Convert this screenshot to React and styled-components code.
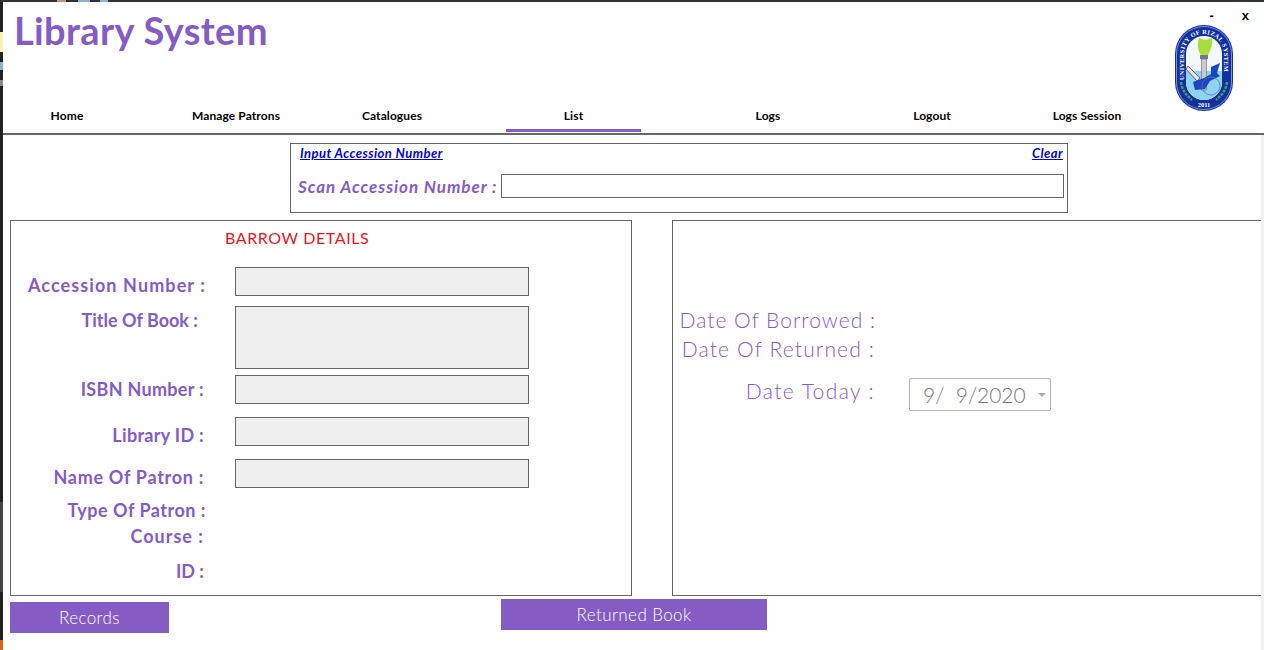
import React from "react";
import styled, { createGlobalStyle } from "styled-components";

const purple = "#845cc4";
const line = "#666";
const font = `"Lato", "Liberation Sans", sans-serif`;

const GlobalStyle = createGlobalStyle`
  html, body {
    margin: 0;
    padding: 0;
    background: #fff;
    overflow: hidden;
  }
`;

const Screen = styled.div`
  width: 1264px;
  height: 650px;
  display: flex;
  flex-direction: column;
  overflow: hidden;
`;

// bits of the desktop that show behind the window
const DesktopTop = styled.div`
  height: 2px;
  flex: none;
  background: linear-gradient(
    to right,
    #333 57px,
    #b09a80 57px,
    #b09a80 66px,
    #333 66px,
    #333 78px,
    #8fb0d8 78px,
    #8fb0d8 90px,
    #333 90px,
    #333 100px,
    #8fb0d8 100px,
    #8fb0d8 108px,
    #333 108px
  );
`;

const Body = styled.div`
  flex: 1;
  display: flex;
  min-height: 0;
`;

const DesktopLeft = styled.div`
  width: 3px;
  flex: none;
  background: linear-gradient(
    to bottom,
    #222 30px,
    #f3f3b4 30px,
    #f3f3b4 50px,
    #222 50px,
    #222 60px,
    #8fb0c8 60px,
    #8fb0c8 68px,
    #222 68px,
    #222 78px,
    #888 78px,
    #888 84px,
    #222 84px,
    #222 500px,
    #444 500px,
    #444 590px,
    #222 590px,
    #222 638px,
    #d8641c 638px
  );
`;

const Window = styled.div`
  flex: 1;
  min-width: 0;
  display: flex;
  flex-direction: column;
  background: #fff;
  font-family: ${font};
`;

const Header = styled.header`
  height: 133px;
  flex: none;
  box-sizing: border-box;
  border-bottom: 2px solid ${line};
  display: flex;
  flex-direction: column;
`;

const TopRow = styled.div`
  height: 102px;
  flex: none;
  display: flex;
  justify-content: space-between;
`;

const Title = styled.h1`
  margin: 6px 0 0 11px;
  color: ${purple};
  font-size: 38px;
  line-height: 44px;
  font-weight: 700;
  letter-spacing: 0.35px;
`;

const Brand = styled.div`
  width: 93px;
  position: relative;
  padding-left: 3px;
  box-sizing: border-box;
`;

const WinControls = styled.div`
  position: absolute;
  top: 6px;
  right: 15px;
  display: flex;
  gap: 28px;
  font-family: "Liberation Sans", sans-serif;
  font-size: 13px;
  font-weight: 700;
  color: #000;
`;

const Nav = styled.nav`
  display: flex;
  height: 28px;
  flex: none;
`;

const NavItem = styled.a`
  width: ${(p) => p.$width}px;
  margin-left: ${(p) => p.$offset || 0}px;
  height: 28px;
  box-sizing: border-box;
  padding-top: 4px;
  text-align: center;
  font-size: 12px;
  font-weight: 700;
  letter-spacing: 0.1px;
  color: #000;
  white-space: nowrap;
  border-bottom: 3px solid ${(p) => (p.$active ? purple : "transparent")};
`;

const Content = styled.main`
  flex: 1;
  min-height: 0;
  border-right: 3px solid #f0f0f0;
`;

const ScanBox = styled.section`
  width: 778px;
  height: 70px;
  margin: 8px 0 0 287px;
  box-sizing: border-box;
  border: 1px solid ${line};
  padding: 1px 3px 0 7px;
`;

const ScanLinks = styled.div`
  display: flex;
  justify-content: space-between;
  height: 29px;
  padding: 0 1px 0 2px;
`;

const LinkText = styled.a`
  color: #0000d0;
  font-size: 13px;
  font-weight: 700;
  font-style: italic;
  letter-spacing: 0.45px;
  text-decoration: underline;
  line-height: 16px;
`;

const ScanRow = styled.div`
  display: flex;
  align-items: center;
  gap: 4px;
`;

const ScanLabel = styled.label`
  width: 199px;
  flex: none;
  color: ${purple};
  font-size: 17px;
  font-weight: 700;
  font-style: italic;
  letter-spacing: 0.95px;
  white-space: nowrap;
`;

const ScanInput = styled.input`
  flex: 1;
  min-width: 0;
  height: 24px;
  box-sizing: border-box;
  border: 1px solid ${line};
  background: #fff;
  outline: none;
  padding: 0;
`;

const Panels = styled.div`
  display: flex;
  margin: 7px 0 0 7px;
`;

const Panel = styled.section`
  width: ${(p) => p.$width}px;
  height: 376px;
  flex: none;
  box-sizing: border-box;
  border: 1px solid ${line};
  border-right-width: ${(p) => (p.$open ? 0 : 1)}px;
`;

const RightPanel = styled(Panel)`
  margin-left: 40px;
  padding-top: 84px;
`;

const PanelHeading = styled.h2`
  margin: 0;
  height: 46px;
  padding: 7px 0 0 214px;
  box-sizing: border-box;
  color: #e3171f;
  font-size: 16px;
  line-height: 20px;
  font-weight: 400;
  letter-spacing: 0.6px;
`;

const Row = styled.div`
  display: flex;
  align-items: flex-start;
  margin-top: ${(p) => p.$top}px;
`;

const FieldLabel = styled.label`
  width: ${(p) => p.$right}px;
  text-align: right;
  color: ${purple};
  font-size: 18px;
  line-height: 22px;
  font-weight: 700;
  letter-spacing: ${(p) => p.$track || 0}px;
  white-space: nowrap;
  padding-top: ${(p) => p.$pad || 0}px;
  flex: none;
`;

const FieldInput = styled.input`
  width: 294px;
  height: ${(p) => p.$height || 29}px;
  margin-left: ${(p) => 224 - p.$right}px;
  box-sizing: border-box;
  border: 1px solid ${line};
  background: #efefef;
  outline: none;
  padding: 0;
  flex: none;
`;

const DateRow = styled.div`
  display: flex;
  align-items: center;
  height: ${(p) => p.$height}px;
  margin-top: ${(p) => p.$top || 0}px;
`;

const DateLabel = styled.label`
  width: ${(p) => p.$right}px;
  text-align: right;
  color: ${purple};
  font-size: 21px;
  font-weight: 300;
  letter-spacing: ${(p) => p.$track}px;
  white-space: nowrap;
  flex: none;
`;

const DatePicker = styled.div`
  width: 142px;
  height: 33px;
  margin: 8px 0 0 34px;
  box-sizing: border-box;
  border: 1px solid #b4b4b4;
  border-radius: 2px;
  color: #777;
  font-size: 21px;
  font-weight: 300;
  padding-left: 13px;
  display: flex;
  align-items: center;
  justify-content: space-between;
  white-space: pre;
`;

const Caret = styled.span`
  width: 0;
  height: 0;
  margin-right: 4px;
  border-left: 4px solid transparent;
  border-right: 4px solid transparent;
  border-top: 4px solid #aaa;
`;

const Actions = styled.div`
  display: flex;
  align-items: flex-start;
  margin: 3px 0 0 7px;
`;

const ActionButton = styled.button`
  width: ${(p) => p.$width}px;
  height: 31px;
  margin-top: ${(p) => p.$top || 0}px;
  margin-left: ${(p) => p.$left || 0}px;
  border: none;
  padding: 0;
  background: ${purple};
  color: #fff;
  font-family: ${font};
  font-size: 17px;
  font-weight: 300;
  letter-spacing: 0.4px;
`;

function Seal() {
  return (
    <svg width="60" height="88" viewBox="0 0 60 88" style={{ marginTop: 22, display: "block" }}>
      <defs>
        <path id="sealArc" d="M10 56 V30 A20 20 0 0 1 50 30 V56" />
      </defs>
      <rect x="1" y="1" width="58" height="86" rx="29" fill="#12309f" />
      <rect x="2.5" y="2.5" width="55" height="83" rx="27.5" fill="none" stroke="#a9bde8" strokeWidth="0.7" />
      <rect x="12" y="12" width="36" height="64" rx="18" fill="#f4f8fb" />
      <text fontFamily="Liberation Serif, serif" fontSize="6.2" fontWeight="700" fill="#fff">
        <textPath href="#sealArc" textLength="106" lengthAdjust="spacing">UNIVERSITY OF RIZAL SYSTEM</textPath>
      </text>
      <path d="M12 47 H48 V58 A18 18 0 0 1 12 58 Z" fill="#8fd3f2" />
      <path d="M25 14 C23 21 24 27 27 31 L34 31 C37 25 39 20 38 13 C35 16 31 17 25 14 Z" fill="#a8de3c" />
      <rect x="26" y="31" width="8" height="4" fill="#778" />
      <rect x="27.5" y="35" width="5" height="31" fill="#c7ccd6" stroke="#667" strokeWidth="0.6" />
      <path d="M14 42 L26 54 L23 57 L12 45 Z" fill="#e8e4d8" stroke="#445" strokeWidth="0.8" />
      <path d="M37 43 L46 39 L43 49 L46 52 L36 57 L31 65 L21 66 L19 58 L30 54 L37 50 Z" fill="#1c46c0" />
      <circle cx="37" cy="62" r="9" fill="none" stroke="#5578a8" strokeWidth="0.8" />
      <path d="M7 58 C8 66 12 71 18 76 M53 58 C52 66 48 71 42 76" fill="none" stroke="#4c9a62" strokeWidth="2.4" strokeDasharray="3 1" />
      <text x="30" y="83" textAnchor="middle" fontFamily="Liberation Serif, serif" fontSize="6.5" fontWeight="700" fill="#fff">2011</text>
    </svg>
  );
}

const navItems = [
  { label: "Home", width: 128 },
  { label: "Manage Patrons", width: 210 },
  { label: "Catalogues", width: 102 },
  { label: "List", width: 135, offset: 63, active: true },
  { label: "Logs", width: 254 },
  { label: "Logout", width: 74 },
  { label: "Logs Session", width: 236 },
];

export default function App() {
  return (
    <Screen>
      <GlobalStyle />
      <DesktopTop />
      <Body>
        <DesktopLeft />
        <Window>
          <Header>
            <TopRow>
              <Title>Library System</Title>
              <Brand>
                <WinControls>
                  <span>-</span>
                  <span>x</span>
                </WinControls>
                <Seal />
              </Brand>
            </TopRow>
            <Nav>
              {navItems.map((item) => (
                <NavItem key={item.label} $width={item.width} $offset={item.offset} $active={item.active}>
                  {item.label}
                </NavItem>
              ))}
            </Nav>
          </Header>

          <Content>
            <ScanBox>
              <ScanLinks>
                <LinkText>Input Accession Number</LinkText>
                <LinkText>Clear</LinkText>
              </ScanLinks>
              <ScanRow>
                <ScanLabel>Scan Accession Number :</ScanLabel>
                <ScanInput />
              </ScanRow>
            </ScanBox>

            <Panels>
              <Panel $width={622}>
                <PanelHeading>BARROW DETAILS</PanelHeading>
                <Row $top={0}>
                  <FieldLabel $right={195} $pad={7} $track={1.1}>Accession Number :</FieldLabel>
                  <FieldInput $right={195} readOnly />
                </Row>
                <Row $top={10}>
                  <FieldLabel $right={187} $pad={3}>Title Of Book :</FieldLabel>
                  <FieldInput $right={187} $height={63} readOnly />
                </Row>
                <Row $top={6}>
                  <FieldLabel $right={193} $pad={3} $track={0.3}>ISBN Number :</FieldLabel>
                  <FieldInput $right={193} readOnly />
                </Row>
                <Row $top={13}>
                  <FieldLabel $right={193} $pad={7} $track={0.3}>Library ID :</FieldLabel>
                  <FieldInput $right={193} readOnly />
                </Row>
                <Row $top={13}>
                  <FieldLabel $right={193} $pad={7} $track={0.7}>Name Of Patron :</FieldLabel>
                  <FieldInput $right={193} readOnly />
                </Row>
                <Row $top={11}>
                  <FieldLabel $right={195} $track={0.5}>Type Of Patron :</FieldLabel>
                </Row>
                <Row $top={4}>
                  <FieldLabel $right={193} $track={1}>Course :</FieldLabel>
                </Row>
                <Row $top={13}>
                  <FieldLabel $right={193}>ID :</FieldLabel>
                </Row>
              </Panel>
              <RightPanel $width={589} $open>
                <DateRow $height={28}>
                  <DateLabel $right={203} $track={1}>Date Of Borrowed :</DateLabel>
                </DateRow>
                <DateRow $height={30}>
                  <DateLabel $right={202} $track={1.15}>Date Of Returned :</DateLabel>
                </DateRow>
                <DateRow $height={33} $top={11}>
                  <DateLabel $right={202} $track={1.4}>Date Today :</DateLabel>
                  <DatePicker>
                    9/  9/2020
                    <Caret />
                  </DatePicker>
                </DateRow>
              </RightPanel>
            </Panels>

            <Actions>
              <ActionButton $width={159} $top={3}>Records</ActionButton>
              <ActionButton $width={266} $left={332}>Returned Book</ActionButton>
            </Actions>
          </Content>
        </Window>
      </Body>
    </Screen>
  );
}
